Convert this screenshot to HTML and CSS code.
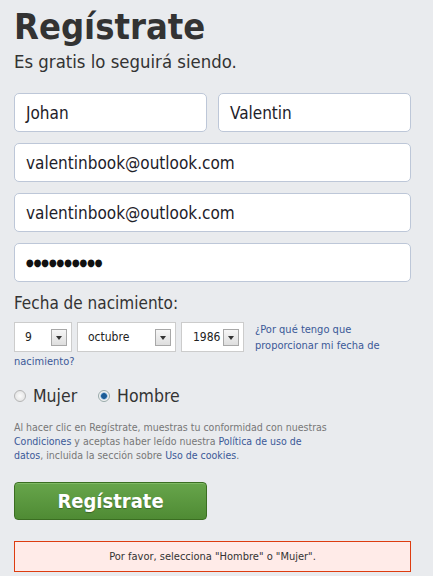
FILE: index.html
```html
<!DOCTYPE html>
<html lang="es">
<head>
<meta charset="utf-8">
<title>Regístrate</title>
<link rel="stylesheet" href="styles.css">
</head>
<body>
<main class="page">
  <h1 class="title">Regístrate</h1>
  <p class="subtitle">Es gratis lo seguirá siendo.</p>

  <div class="fields">
    <div class="row">
      <div class="input">Johan</div>
      <div class="input">Valentin</div>
    </div>
    <div class="input">valentinbook@outlook.com</div>
    <div class="input">valentinbook@outlook.com</div>
    <div class="input pass">●●●●●●●●●●</div>
  </div>

  <h2 class="label">Fecha de nacimiento:</h2>
  <div class="birth">
    <div class="selects">
      <div class="select day"><span class="val">9</span><span class="drop"></span></div>
      <div class="select month"><span class="val">octubre</span><span class="drop"></span></div>
      <div class="select year"><span class="val">1986</span><span class="drop"></span></div>
    </div>
    <a class="why">¿Por qué tengo que proporcionar mi fecha de nacimiento?</a>
  </div>

  <div class="gender">
    <label class="radio"><span class="dot"></span>Mujer</label>
    <label class="radio"><span class="dot on"></span>Hombre</label>
  </div>

  <p class="terms">Al hacer clic en Regístrate, muestras tu conformidad con nuestras <a>Condiciones</a> y aceptas haber leído nuestra <a>Política de uso de datos</a>, incluida la sección sobre <a>Uso de cookies</a>.</p>

  <div class="btn">Regístrate</div>

  <div class="error">Por favor, selecciona "Hombre" o "Mujer".</div>
</main>
</body>
</html>
```
FILE: styles.css
```css
* { box-sizing: border-box; }
html, body { margin: 0; padding: 0; }
body {
  background: #e9ebee;
  font-family: "DejaVu Sans Condensed", "DejaVu Sans", Verdana, sans-serif;
  font-stretch: condensed;
  color: #1d2129;
  width: 433px;
  height: 576px;
  overflow: hidden;
}
.page { padding: 6px 22px 0 14px; }
.title {
  margin: 0;
  font-size: 36px;
  line-height: 42px;
  font-weight: bold;
  color: #333;
}
.subtitle {
  margin: 4px 0 0;
  font-size: 18.4px;
  line-height: 20px;
  color: #333;
}
.fields {
  margin-top: 21px;
  display: flex;
  flex-direction: column;
  gap: 11px;
}
.row { display: flex; gap: 11px; }
.row .input { flex: 1; }
.input {
  height: 39px;
  background: #fff;
  border: 1px solid #bdc7d8;
  border-radius: 5px;
  padding: 0 11px;
  display: flex;
  align-items: center;
  font-size: 17px;
  color: #1d2129;
}
.pass { font-size: 10px; letter-spacing: -0.2px; color: #111; }
.label {
  margin: 10px 0 0;
  font-weight: normal;
  font-size: 17px;
  line-height: 22px;
  color: #333;
}
.birth {
  margin-top: 8px;
  width: 375px;
  font-size: 11px;
  line-height: 16px;
}
.selects { float: left; display: flex; gap: 5px; margin-right: 11px; height: 30px; }
.select {
  height: 30px;
  background: #fff;
  border: 1px solid #ccc;
  display: flex;
  align-items: center;
  justify-content: space-between;
  padding: 0 4px 0 10px;
  font-size: 12px;
  color: #222;
}
.day { width: 58px; }
.month { width: 99px; }
.year { width: 63px; padding-left: 11px; }
.drop {
  width: 16px;
  height: 17px;
  border: 1px solid #a8a8a8;
  background: linear-gradient(#f6f6f6, #dedede);
  position: relative;
}
.drop::after {
  content: "";
  position: absolute;
  left: 4px;
  top: 6px;
  border-left: 3.5px solid transparent;
  border-right: 3.5px solid transparent;
  border-top: 4px solid #333;
}
.why { color: #3b5998; }
.gender {
  clear: both;
  margin-top: 16px;
  display: flex;
  align-items: center;
  gap: 21px;
  font-size: 17.5px;
  color: #333;
}
.radio { display: flex; align-items: center; gap: 7px; }
.dot {
  width: 12px;
  height: 12px;
  border-radius: 50%;
  border: 1px solid #b5b5b5;
  background: radial-gradient(#fbfbfb, #dedede);
}
.dot.on {
  background: radial-gradient(circle, #1c5c96 0 2.5px, #6aa0d0 3px, #f2f2f2 4px);
  border-color: #9aa;
}
.terms {
  margin: 14px 0 0;
  font-size: 10.5px;
  line-height: 14px;
  color: #777;
  width: 316px;
}
.terms a { color: #3b5998; }
.btn {
  margin-top: 20px;
  width: 193px;
  height: 38px;
  border: 1px solid #3b6e22;
  border-radius: 4px;
  background: linear-gradient(#67a54b, #4f8b34);
  color: #fff;
  font-weight: bold;
  font-size: 20px;
  display: flex;
  align-items: center;
  justify-content: center;
  text-shadow: 0 1px 1px rgba(0,0,0,0.3);
  box-shadow: inset 0 1px 0 #7fb965;
}
.error {
  margin-top: 21px;
  height: 31px;
  background: #ffebe8;
  border: 1px solid #dd3c10;
  font-size: 11px;
  color: #333;
  display: flex;
  align-items: center;
  justify-content: center;
}
```
